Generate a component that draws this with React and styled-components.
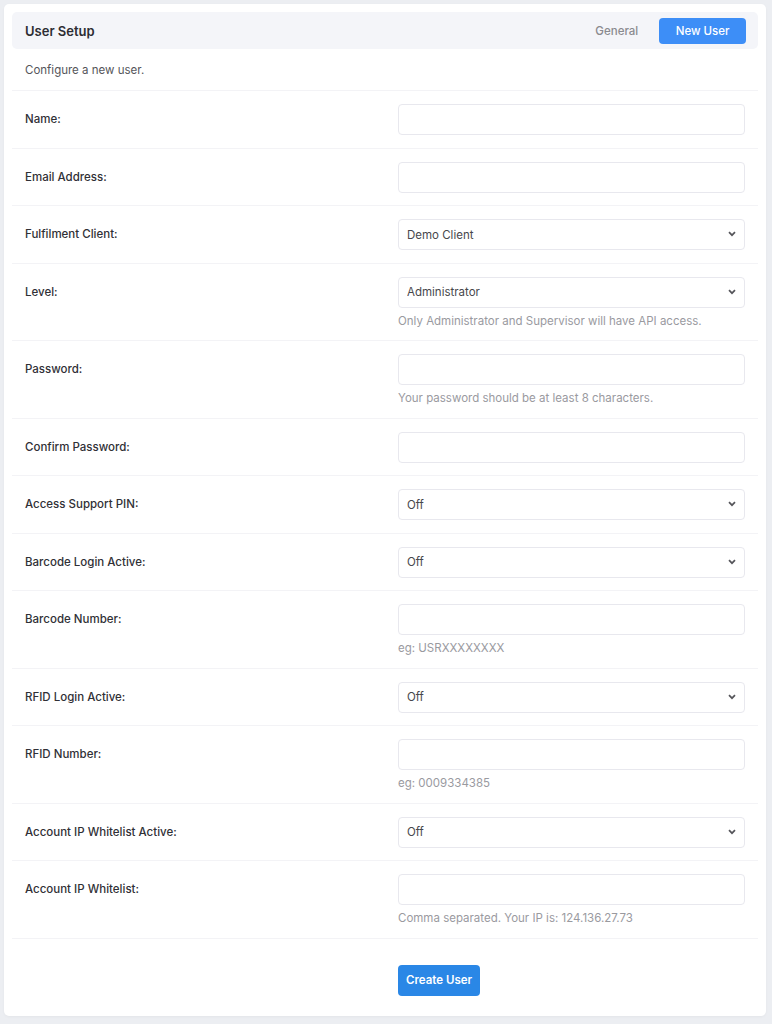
import React from "react";
import styled, { createGlobalStyle } from "styled-components";

const GlobalStyle = createGlobalStyle`
  body {
    margin: 0;
    background: #eceef2;
    font-family: Inter, "Noto Sans", sans-serif;
    color: #333;
  }
`;

const Page = styled.div`
  padding: 4px 6px 9px 4px;
`;

const Card = styled.div`
  background: #fff;
  border-radius: 5px;
  padding: 8px 8px 20px;
  box-shadow: 0 1px 3px rgba(0, 0, 0, 0.04);
`;

const Header = styled.div`
  display: flex;
  align-items: center;
  justify-content: space-between;
  height: 37px;
  padding: 0 12px 0 13px;
  background: #f4f5f9;
  border-radius: 5px;
`;

const Title = styled.h1`
  margin: 0;
  font-size: 13px;
  font-weight: 600;
  color: #2d2d33;
`;

const Tabs = styled.div`
  display: flex;
  align-items: center;
  gap: 4px;
`;

const Tab = styled.button`
  border: none;
  font-family: inherit;
  font-size: 11.5px;
  font-weight: 500;
  height: 26px;
  padding: 0 ${(p) => (p.active ? "16.5px" : "17px")};
  border-radius: 4px;
  cursor: pointer;
  background: ${(p) => (p.active ? "#3d8ef7" : "transparent")};
  color: ${(p) => (p.active ? "#fff" : "#8a8a8f")};
`;

const Intro = styled.p`
  margin: 0;
  padding: 14px 13px 13px;
  font-size: 11.5px;
  color: #55555a;
  border-bottom: 1px solid #f3f3f6;
`;

const Row = styled.div`
  display: grid;
  grid-template-columns: 1fr 1fr;
  padding: 13px 0 ${(p) => (p.help ? "11.5px" : "12.5px")};
  border-bottom: 1px solid #f3f3f6;
`;

const Label = styled.label`
  padding: 0 13px;
  line-height: 31px;
  font-size: 11.5px;
  font-weight: 500;
  color: #303036;
`;

const Field = styled.div`
  padding: 0 13px;
  display: flex;
  flex-direction: column;
  align-items: flex-start;
`;

const Input = styled.input`
  box-sizing: border-box;
  width: 100%;
  height: 31px;
  border: 1px solid #e8e8ee;
  border-radius: 4px;
  padding: 0 8px;
  font-family: inherit;
  font-size: 11.5px;
  color: #444;
  outline: none;
`;

const SelectWrap = styled.div`
  position: relative;
  width: 100%;
`;

const Select = styled.select`
  box-sizing: border-box;
  width: 100%;
  height: 31px;
  border: 1px solid #e8e8ee;
  border-radius: 4px;
  padding: 0 8px;
  background: #fff;
  font-family: inherit;
  font-size: 11.5px;
  color: #47474c;
  appearance: none;
  outline: none;
`;

const Chevron = styled.svg`
  position: absolute;
  right: 9px;
  top: 12px;
  pointer-events: none;
`;

const Help = styled.div`
  margin-top: 5px;
  font-size: 11.5px;
  color: #9a9a9f;
  line-height: 16px;
`;

const SubmitRow = styled.div`
  display: grid;
  grid-template-columns: 1fr 1fr;
  padding-top: 26px;
`;

const Submit = styled.button`
  grid-column: 2;
  justify-self: start;
  margin-left: 13px;
  height: 31px;
  padding: 0 8px;
  border: none;
  border-radius: 4px;
  background: #2a87e6;
  color: #fff;
  font-family: inherit;
  font-size: 11.5px;
  font-weight: 600;
  cursor: pointer;
`;

const fields = [
  { label: "Name:", type: "text" },
  { label: "Email Address:", type: "email" },
  { label: "Fulfilment Client:", options: ["Demo Client"] },
  {
    label: "Level:",
    options: ["Administrator", "Supervisor", "User"],
    help: "Only Administrator and Supervisor will have API access.",
  },
  {
    label: "Password:",
    type: "password",
    help: "Your password should be at least 8 characters.",
  },
  { label: "Confirm Password:", type: "password" },
  { label: "Access Support PIN:", options: ["Off", "On"] },
  { label: "Barcode Login Active:", options: ["Off", "On"] },
  { label: "Barcode Number:", type: "text", help: "eg: USRXXXXXXXX" },
  { label: "RFID Login Active:", options: ["Off", "On"] },
  { label: "RFID Number:", type: "text", help: "eg: 0009334385" },
  { label: "Account IP Whitelist Active:", options: ["Off", "On"] },
  {
    label: "Account IP Whitelist:",
    type: "text",
    help: "Comma separated. Your IP is: 124.136.27.73",
  },
];

const Control = ({ field }) =>
  field.options ? (
    <SelectWrap>
      <Select defaultValue={field.options[0]}>
        {field.options.map((o) => (
          <option key={o}>{o}</option>
        ))}
      </Select>
      <Chevron width="8" height="6" viewBox="0 0 8 6">
        <path d="M1 1.2L4 4.2L7 1.2" fill="none" stroke="#55555a" strokeWidth="1.7" />
      </Chevron>
    </SelectWrap>
  ) : (
    <Input type={field.type} />
  );

const App = () => (
  <Page>
    <GlobalStyle />
    <Card>
      <Header>
        <Title>User Setup</Title>
        <Tabs>
          <Tab>General</Tab>
          <Tab active>New User</Tab>
        </Tabs>
      </Header>
      <Intro>Configure a new user.</Intro>
      {fields.map((f) => (
        <Row key={f.label} help={!!f.help}>
          <Label>{f.label}</Label>
          <Field>
            <Control field={f} />
            {f.help && <Help>{f.help}</Help>}
          </Field>
        </Row>
      ))}
      <SubmitRow>
        <Submit>Create User</Submit>
      </SubmitRow>
    </Card>
  </Page>
);

export default App;
